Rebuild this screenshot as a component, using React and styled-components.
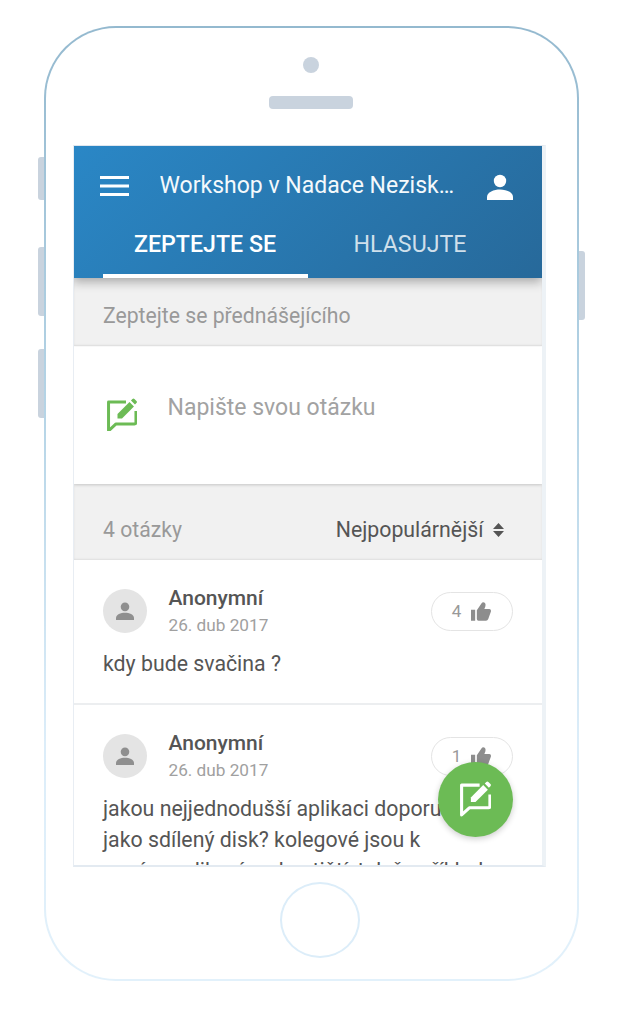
import React from 'react';
import styled, { createGlobalStyle } from 'styled-components';

const GlobalStyle = createGlobalStyle`
  html, body {
    margin: 0;
    padding: 0;
    background: #fff;
  }

  * {
    box-sizing: border-box;
  }
`;

const Page = styled.div`
  width: 618px;
  height: 1024px;
  padding: 26px 39px 0 44px;
  overflow: hidden;
  font-family: Roboto, 'Liberation Sans', sans-serif;
`;

const Phone = styled.div`
  position: relative;
  width: 535px;
  height: 955px;
  padding: 0 0 0 26.5px;
  display: flex;
  flex-direction: column;
  border-radius: 72px;
  border: 2.5px solid transparent;
  background:
    linear-gradient(#fff, #fff) padding-box,
    linear-gradient(180deg, #94b9cf 0%, #b5d4e6 40%, #dcedf9 75%, #e2f1fb 100%) border-box;
`;

const SideButton = styled.div`
  position: absolute;
  top: ${({ $top }) => $top}px;
  height: ${({ $height }) => $height}px;
  width: 6px;
  background: #c9d3de;
  ${({ $right }) => ($right ? 'right: -7.5px; border-radius: 0 3px 3px 0;' : 'left: -8.5px; border-radius: 3px 0 0 3px;')}
`;

const Camera = styled.div`
  align-self: center;
  width: 16px;
  height: 16px;
  margin: 28.5px 0 0 -28px;
  border-radius: 50%;
  background: #c9d3de;
`;

const Speaker = styled.div`
  align-self: center;
  width: 84px;
  height: 13px;
  margin: 23px 0 0 -28px;
  border-radius: 4px;
  background: #c9d3de;
`;

const Screen = styled.div`
  position: relative;
  width: 473px;
  height: 722px;
  margin-top: 36px;
  overflow: hidden;
  background: #fff;
  border-top: 1px solid #dfe6ee;
  border-right: 4px solid #edf2f6;
  border-bottom: 2px solid #e3eaf1;
  border-left: 1px solid #e8edf3;
`;

const Header = styled.header`
  position: relative;
  z-index: 2;
  height: 132px;
  margin-left: -1px;
  background: linear-gradient(135deg, #2a87c6 0%, #27699a 100%);
  box-shadow: 0 4px 10px rgba(0, 0, 0, 0.3);
  color: #fff;
`;

const TitleRow = styled.div`
  display: flex;
  align-items: center;
  height: 80px;
  padding-left: 27px;
`;

const Title = styled.div`
  width: 295px;
  margin-left: 31px;
  font-size: 23px;
  line-height: 28px;
  white-space: nowrap;
  overflow: hidden;
  text-overflow: ellipsis;
  color: #f4f9fc;
`;

const UserSlot = styled.div`
  margin: 2px 0 0 32px;
`;

const Tabs = styled.div`
  display: flex;
  padding-left: 30px;
`;

const Tab = styled.div`
  width: 205px;
  height: 52px;
  padding-top: 3px;
  text-align: center;
  font-size: 23.2px;
  line-height: 30px;
  font-weight: ${({ $active }) => ($active ? 500 : 400)};
  color: ${({ $active }) => ($active ? '#fff' : 'rgba(255, 255, 255, 0.78)')};
  border-bottom: 4px solid ${({ $active }) => ($active ? '#fff' : 'transparent')};
`;

const GreyBand = styled.div`
  display: flex;
  align-items: center;
  justify-content: space-between;
  height: ${({ $height }) => $height}px;
  padding: ${({ $pad }) => $pad || 0}px 38px 0 29.5px;
  background: #f1f1f1;
  box-shadow: inset 0 -1px 2px rgba(0, 0, 0, 0.08);
`;

const BandLabel = styled.div`
  font-size: 21.2px;
  line-height: 24px;
  color: #999;
`;

const Composer = styled.div`
  position: relative;
  display: flex;
  align-items: flex-start;
  height: 137px;
  margin-top: 1px;
  padding: 51px 0 0 33px;
  background: #fff;
  box-shadow: 0 1px 3px rgba(0, 0, 0, 0.18);
`;

const Placeholder = styled.div`
  margin: -4px 0 0 31px;
  font-size: 23px;
  line-height: 28px;
  color: #a2a2a2;
`;

const Sort = styled.div`
  display: flex;
  align-items: center;
  gap: 9px;
  font-size: 21.3px;
  line-height: 24px;
  color: #555;
`;

const Question = styled.div`
  padding: 29px 29px 0;
  height: ${({ $height }) => $height}px;
  border-bottom: ${({ $last }) => ($last ? 'none' : '2px solid #eceef0')};
`;

const QuestionHead = styled.div`
  display: flex;
  align-items: flex-start;
`;

const Avatar = styled.div`
  display: flex;
  align-items: center;
  justify-content: center;
  flex: none;
  width: 44px;
  height: 44px;
  border-radius: 50%;
  background: #e4e4e4;
`;

const Meta = styled.div`
  flex: 1;
  margin: -3px 0 0 22px;
`;

const Name = styled.div`
  font-size: 21px;
  line-height: 24px;
  font-weight: 500;
  color: #555;
`;

const DateText = styled.div`
  margin-top: 5px;
  font-size: 17.2px;
  line-height: 20px;
  color: #a0a0a0;
`;

const LikePill = styled.div`
  display: flex;
  align-items: center;
  justify-content: center;
  gap: 10px;
  width: 82px;
  height: 39px;
  margin-top: 3px;
  border: 1.5px solid #e4e4e4;
  border-radius: 20px;
  font-size: 17px;
  color: #999;
`;

const Body = styled.p`
  margin: 13.5px 0 0 0.5px;
  width: 412px;
  font-size: 21.3px;
  line-height: 31px;
  color: #555;
  white-space: pre-line;
`;

const Fab = styled.div`
  position: absolute;
  z-index: 3;
  left: 364.5px;
  top: 616px;
  display: flex;
  align-items: center;
  justify-content: center;
  width: 75px;
  height: 75px;
  border-radius: 50%;
  background: #6cbb55;
  box-shadow: 0 2px 6px rgba(0, 0, 0, 0.2);
`;

const HomeButton = styled.div`
  align-self: center;
  width: 80px;
  height: 76px;
  margin: 15px 0 0 -9px;
  border-radius: 50%;
  border: 2.5px solid #dcedf9;
`;

const MenuIcon = () => (
  <svg width="29" height="20" viewBox="0 0 29 20" style={{ display: 'block', marginTop: 1 }}>
    <rect x="0" y="0" width="29" height="3" fill="#fff" />
    <rect x="0" y="8.500" width="29" height="3" fill="#fff" />
    <rect x="0" y="17" width="29" height="3" fill="#fff" />
  </svg>
);

const Person = ({ size, color }) => (
  <svg width={size} height={size} viewBox="0 0 26 26" style={{ display: 'block' }}>
    <circle cx="13" cy="7" r="6.2" fill={color} />
    <path d="M0 26v-3.2C0 18 7 15.4 13 15.4s13 2.6 13 7.4V26z" fill={color} />
  </svg>
);

// speech bubble with pencil, used on the composer and the floating button
const ComposeIcon = ({ size, color }) => (
  <svg width={size} height={size * 1.13} viewBox="0 0 30 34" style={{ display: 'block' }}>
    <path
      d="M19 4H1.500v29L9 26h18.500q1.500 0 1.500-1.500V13"
      fill="none"
      stroke={color}
      strokeWidth="3"
      strokeLinejoin="round"
    />
    <path d="M10.500 20.500v-4.500L22.500 4l4.500 4.500L15 20.500z" fill={color} />
    <path d="M24 2.500l1.500-1.500q1-1 2 0l2 2q1 1 0 2l-1.500 1.500z" fill={color} />
  </svg>
);

const ThumbIcon = () => (
  <svg width="20" height="19" viewBox="0 0 24 22" style={{ display: 'block' }}>
    <path
      d="M0 9h5v13H0zM7 9.500l5.500-8q.8-1.500 2.500-1.500 2.500 0 2.500 3 0 2-1.500 5h6q2 0 2 2.200 0 .8-.3 1.500l-3 8.300q-.8 2-2.700 2H9q-2 0-2-2z"
      fill="#8d8d8d"
    />
  </svg>
);

const SortIcon = () => (
  <svg width="11" height="14" viewBox="0 0 11 14" style={{ display: 'block' }}>
    <path d="M5.500 0L11 6H0zM5.500 14L0 8h11z" fill="#555" />
  </svg>
);

const questions = [
  { id: 1, likes: 4, height: 145, text: 'kdy bude svačina ?' },
  {
    id: 2,
    likes: 1,
    height: 176,
    last: true,
    text: 'jakou nejjednodušší aplikaci doporučujete\njako sdílený disk? kolegové jsou k\nnovým aplikacím skeptičtí, tak že příklad',
  },
];

const App = () => (
  <Page>
    <GlobalStyle />
    <Phone>
      <SideButton $top={128.5} $height={43} />
      <SideButton $top={218.5} $height={69} />
      <SideButton $top={320.5} $height={69} />
      <SideButton $right $top={222.5} $height={69} />
      <Camera />
      <Speaker />
      <Screen>
        <Header>
          <TitleRow>
            <MenuIcon />
            <Title>Workshop v Nadace Neziskovky.cz</Title>
            <UserSlot>
              <Person size={26} color="#fff" />
            </UserSlot>
          </TitleRow>
          <Tabs>
            <Tab $active>ZEPTEJTE SE</Tab>
            <Tab>HLASUJTE</Tab>
          </Tabs>
        </Header>
        <GreyBand $height={68} $pad={8}>
          <BandLabel>Zeptejte se přednášejícího</BandLabel>
        </GreyBand>
        <Composer>
          <ComposeIcon size={30} color="#6cbb55" />
          <Placeholder>Napište svou otázku</Placeholder>
        </Composer>
        <GreyBand $height={76} $pad={16}>
          <BandLabel>4 otázky</BandLabel>
          <Sort>
            Nejpopulárnější
            <SortIcon />
          </Sort>
        </GreyBand>
        {questions.map(question => (
          <Question key={question.id} $height={question.height} $last={question.last}>
            <QuestionHead>
              <Avatar>
                <Person size={18} color="#8f8f8f" />
              </Avatar>
              <Meta>
                <Name>Anonymní</Name>
                <DateText>26. dub 2017</DateText>
              </Meta>
              <LikePill>
                {question.likes}
                <ThumbIcon />
              </LikePill>
            </QuestionHead>
            <Body>{question.text}</Body>
          </Question>
        ))}
        <Fab>
          <ComposeIcon size={31} color="#fff" />
        </Fab>
      </Screen>
      <HomeButton />
    </Phone>
  </Page>
);

export default App;
